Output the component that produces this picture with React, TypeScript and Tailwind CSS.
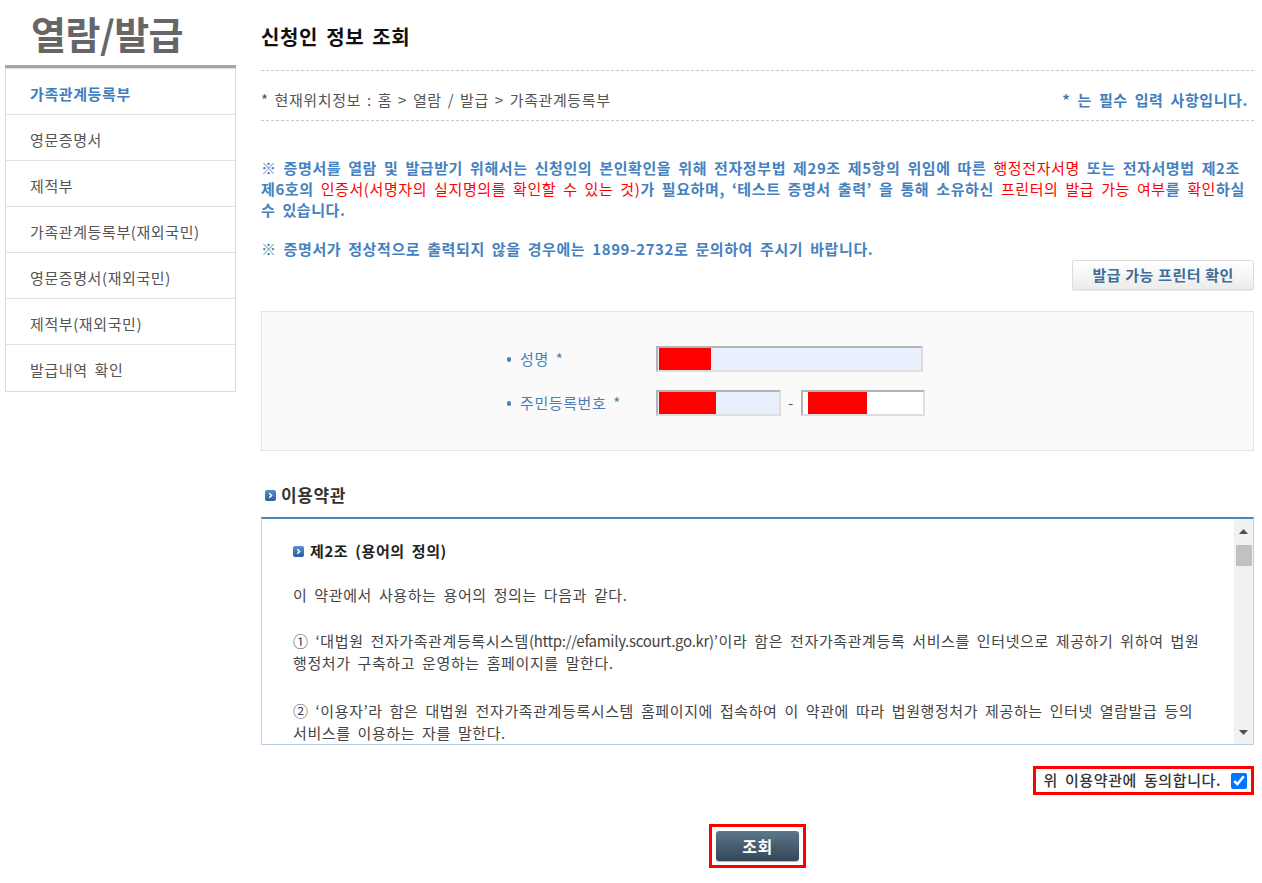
import React from 'react';

const menu = [
  '가족관계등록부',
  '영문증명서',
  '제적부',
  '가족관계등록부(재외국민)',
  '영문증명서(재외국민)',
  '제적부(재외국민)',
  '발급내역 확인',
];

const BulletIcon = () => (
  <svg width="11" height="11" viewBox="0 0 11 11" className="shrink-0">
    <defs>
      <linearGradient id="bi" x1="0" y1="0" x2="0" y2="1">
        <stop offset="0" stopColor="#5b8fcc" />
        <stop offset="1" stopColor="#2b5d9c" />
      </linearGradient>
    </defs>
    <rect x="0" y="0" width="11" height="11" rx="2" fill="url(#bi)" />
    <path d="M4.3 3.2 L6.6 5.5 L4.3 7.8" fill="none" stroke="#fff" strokeWidth="1.5" />
  </svg>
);

const Redacted = ({ w }: { w: string }) => (
  <span className={`block h-[22px] bg-[#ff0000] ${w}`} />
);

const Dot = () => <span className="w-[4px] h-[5px] rounded-full bg-[#4a7fb8] shrink-0" />;

export default function App() {
  return (
    <div className="w-[1262px] min-h-[883px] bg-white flex font-['Noto_Sans_CJK_KR',sans-serif] text-[15px] text-[#555] tracking-[0.6px] [word-spacing:3px]">
      {/* 좌측 메뉴 */}
      <aside className="w-[231px] ml-[5px] shrink-0">
        <div className="h-[65px] pl-[26px] flex items-center">
          <span className="text-[38px] font-bold text-[#666] tracking-[-0.5px] leading-none">열람/발급</span>
        </div>
        <div className="h-[3px] bg-[#a6a6a6]" />
        <ul className="border-x border-b border-t border-[#ddd]">
          {menu.map((m, i) => (
            <li
              key={m}
              className={`h-[46px] pl-[24px] pt-[5px] flex items-center ${i < menu.length - 1 ? 'border-b border-[#e2e2e2]' : ''} ${i === 0 ? 'text-[#3f7fc0] font-semibold' : 'text-[#555]'}`}
            >
              {m}
            </li>
          ))}
        </ul>
      </aside>

      {/* 본문 */}
      <main className="ml-[25px] w-[993px] shrink-0">
        <div className="h-[70px] flex items-center pt-[4px]">
          <h1 className="text-[20px] font-bold text-[#111]">신청인 정보 조회</h1>
        </div>
        <div className="h-[51px] border-y border-dashed border-[#c8c8c8] flex items-center justify-between pt-[9px]">
          <span className="text-[#555] [word-spacing:2px]">* 현재위치정보 : 홈 &gt; 열람 / 발급 &gt; 가족관계등록부</span>
          <span className="text-[#3f7fc0] font-semibold mr-[6px]">* 는 필수 입력 사항입니다.</span>
        </div>

        <div className="mt-[36px] text-[#4581c0] font-bold leading-[21px] whitespace-nowrap">
          <p>
            ※ 증명서를 열람 및 발급받기 위해서는 신청인의 본인확인을 위해 전자정부법 제29조 제5항의 위임에 따른{' '}
            <span className="text-[#ff0000] font-normal">행정전자서명</span> 또는 전자서명법 제2조
            <br />
            제6호의 <span className="text-[#ff0000] font-normal">인증서(서명자의 실지명의를 확인할 수 있는 것)</span>가 필요하며, ‘테스트 증명서 출력’ 을 통해 소유하신{' '}
            <span className="text-[#ff0000] font-normal">프린터의 발급 가능 여부</span>를{' '}
            <span className="text-[#ff0000] font-normal">확인</span>하실
            <br />
            수 있습니다.
          </p>
          <p className="mt-[18px]">※ 증명서가 정상적으로 출력되지 않을 경우에는 1899-2732로 문의하여 주시기 바랍니다.</p>
        </div>

        <div className="flex justify-end mt-[1px]">
          <button className="h-[30px] px-[19px] border border-[#dcdcdc] rounded-[2px] bg-gradient-to-b from-white to-[#ececec] text-[#3d6d98] font-bold shadow-[0_1px_1px_rgba(0,0,0,0.08)]">
            발급 가능 프린터 확인
          </button>
        </div>

        {/* 입력 폼 */}
        <div className="mt-[21px] h-[140px] border border-[#e3e3e3] bg-[#fafafa] pt-[34px] pl-[245px] flex flex-col gap-[18px]">
          <div className="flex items-center">
            <span className="w-[149px] text-[#4a7fb8] flex items-center gap-[9px]">
              <Dot />
              성명 *
            </span>
            <div className="w-[267px] h-[26px] border-2 border-t-[#b5b5b5] border-l-[#b5b5b5] border-r-[#dedede] border-b-[#dedede] bg-[#e8f0fe] px-[1px] flex items-center">
              <Redacted w="w-[52px]" />
            </div>
          </div>
          <div className="flex items-center">
            <span className="w-[149px] text-[#4a7fb8] flex items-center gap-[9px]">
              <Dot />
              주민등록번호 *
            </span>
            <div className="w-[125px] h-[26px] border-2 border-t-[#b5b5b5] border-l-[#b5b5b5] border-r-[#dedede] border-b-[#dedede] bg-[#e8f0fe] px-[1px] flex items-center">
              <Redacted w="w-[57px]" />
            </div>
            <span className="w-[20px] text-center text-[#555]">-</span>
            <div className="w-[124px] h-[26px] border-2 border-t-[#b5b5b5] border-l-[#b5b5b5] border-r-[#dedede] border-b-[#dedede] bg-white pl-[5px] flex items-center">
              <Redacted w="w-[59px]" />
            </div>
          </div>
        </div>

        {/* 이용약관 */}
        <div className="mt-[30px] h-[28px] flex items-center gap-[5px] pl-[4px]">
          <BulletIcon />
          <h2 className="text-[17px] font-bold text-[#333]">이용약관</h2>
        </div>
        <div className="mt-[8px] h-[228px] border-t-2 border-t-[#4a86b8] border-x border-b border-[#b8d0e6] flex">
          <div className="flex-1 overflow-hidden pl-[31px] pt-[21px] text-[#444] leading-[22px] whitespace-nowrap">
            <div className="flex items-center gap-[6px] font-bold text-[#222] mb-[22px]">
              <BulletIcon />
              제2조 (용어의 정의)
            </div>
            <p className="mb-[24px]">이 약관에서 사용하는 용어의 정의는 다음과 같다.</p>
            <p className="mb-[26px]">
              ① ‘대법원 전자가족관계등록시스템<span className="tracking-[-0.3px]">(http://efamily.scourt.go.kr)</span>’이라 함은 전자가족관계등록 서비스를 인터넷으로 제공하기 위하여 법원
              <br />
              행정처가 구축하고 운영하는 홈페이지를 말한다.
            </p>
            <p>
              ② ‘이용자’라 함은 대법원 전자가족관계등록시스템 홈페이지에 접속하여 이 약관에 따라 법원행정처가 제공하는 인터넷 열람발급 등의
              <br />
              서비스를 이용하는 자를 말한다.
            </p>
          </div>
          {/* 스크롤바 */}
          <div className="w-[19px] bg-[#f1f1f1] flex flex-col items-center">
            <div className="h-[24px] flex items-center justify-center">
              <svg width="9" height="5" viewBox="0 0 9 5">
                <path d="M0 5 L4.5 0 L9 5 Z" fill="#505050" />
              </svg>
            </div>
            <div className="mt-[2px] w-[16px] h-[21px] bg-[#c1c1c1]" />
            <div className="flex-1" />
            <div className="h-[24px] flex items-center justify-center">
              <svg width="9" height="5" viewBox="0 0 9 5">
                <path d="M0 0 L9 0 L4.5 5 Z" fill="#505050" />
              </svg>
            </div>
          </div>
        </div>

        <div className="mt-[21px] flex justify-end">
          <label className="h-[29px] border-[3px] border-[#ff0000] pl-[8px] pr-[4px] flex items-center gap-[10px] text-[#333] font-medium">
            위 이용약관에 동의합니다.
            <input type="checkbox" defaultChecked className="w-[16px] h-[16px] m-0" />
          </label>
        </div>

        <div className="mt-[29px] flex justify-center">
          <div className="border-[3px] border-[#ff0000] p-[4px]">
            <button className="w-[83px] h-[30px] rounded-[3px] bg-gradient-to-b from-[#5d778b] to-[#344757] text-white font-bold text-[16px] shadow-[0_1px_1px_rgba(0,0,0,0.3)]">
              조회
            </button>
          </div>
        </div>
      </main>
    </div>
  );
}
